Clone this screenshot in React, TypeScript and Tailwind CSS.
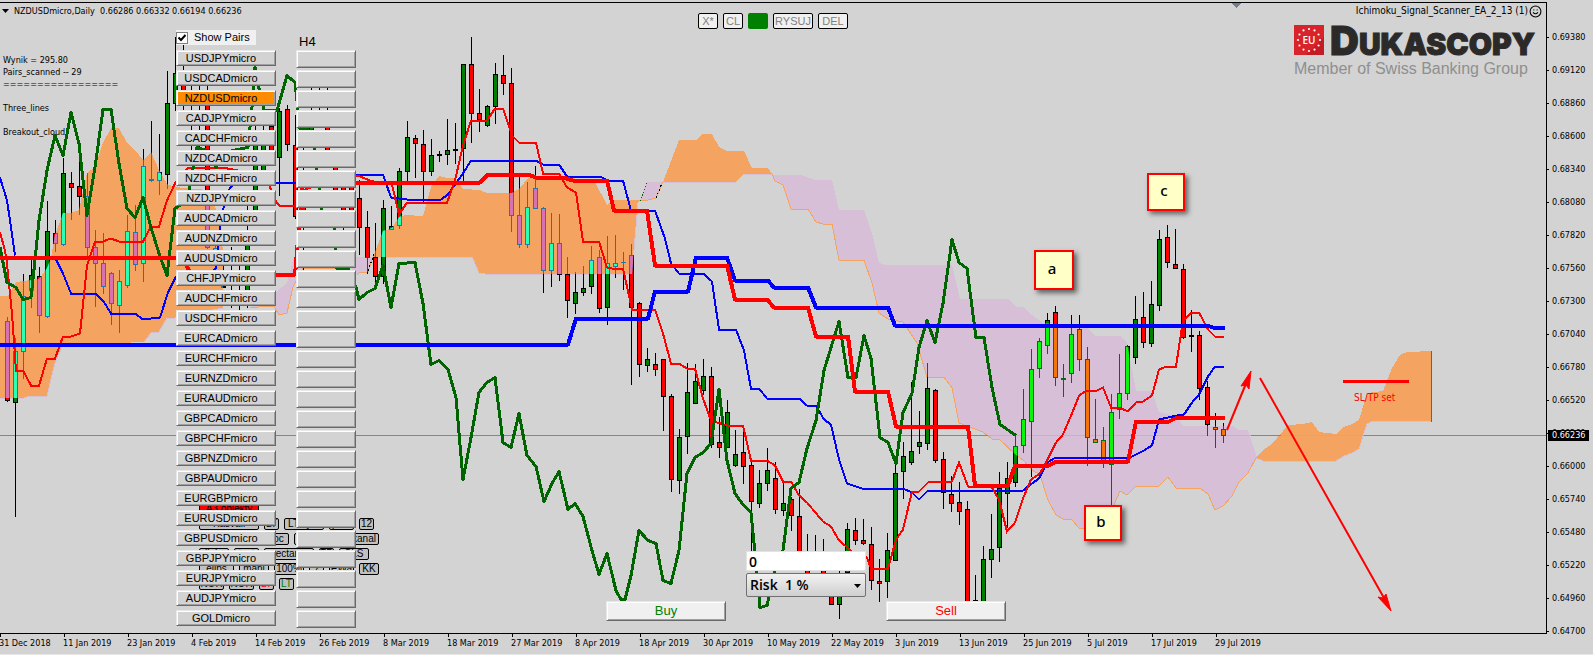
import React from "react";
import { Smile } from "lucide-react";

const UI = "font-['DejaVu_Sans_Condensed','DejaVu_Sans',sans-serif]";

const pairs = [
  "USDJPY", "USDCAD", "NZDUSD", "CADJPY", "CADCHF", "NZDCAD", "NZDCHF", "NZDJPY",
  "AUDCAD", "AUDNZD", "AUDUSD", "CHFJPY", "AUDCHF", "USDCHF", "EURCAD", "EURCHF",
  "EURNZD", "EURAUD", "GBPCAD", "GBPCHF", "GBPNZD", "GBPAUD", "EURGBP", "EURUSD",
  "GBPUSD", "GBPJPY", "EURJPY", "AUDJPY", "GOLD",
];

const dates = [
  "31 Dec 2018", "11 Jan 2019", "23 Jan 2019", "4 Feb 2019", "14 Feb 2019",
  "26 Feb 2019", "8 Mar 2019", "18 Mar 2019", "27 Mar 2019", "8 Apr 2019",
  "18 Apr 2019", "30 Apr 2019", "10 May 2019", "22 May 2019", "3 Jun 2019",
  "13 Jun 2019", "25 Jun 2019", "5 Jul 2019", "17 Jul 2019", "29 Jul 2019",
];

const prices = Array.from({ length: 19 }, (_, i) => ((69380 - i * 260) / 100000).toFixed(5));

// x, high, low, body top, body bottom, direction
type Candle = [number, number, number, number, number, "u" | "d"];

const candles: Candle[] = [
  [7, 317, 401, 321, 400, "d"], [15, 338, 516, 351, 402, "u"], [23, 274, 378, 296, 351, "u"],
  [31, 259, 307, 275, 290, "u"], [39, 267, 332, 276, 315, "d"], [47, 201, 317, 231, 316, "u"],
  [55, 220, 251, 233, 243, "d"], [63, 158, 245, 173, 244, "u"], [71, 172, 219, 183, 187, "d"],
  [79, 156, 214, 186, 196, "d"], [87, 173, 255, 196, 247, "d"], [95, 230, 306, 247, 263, "d"],
  [103, 233, 293, 263, 286, "d"], [111, 272, 324, 273, 303, "d"], [119, 270, 332, 281, 305, "u"],
  [127, 215, 287, 231, 285, "u"], [135, 205, 270, 232, 264, "d"], [143, 149, 281, 166, 263, "u"],
  [151, 121, 181, 179, 180, "u"], [159, 134, 194, 172, 180, "u"], [167, 71, 188, 103, 174, "u"],
  [175, 37, 110, 73, 103, "u"], [183, 45, 110, 75, 95, "d"], [191, 85, 150, 95, 101, "d"],
  [199, 85, 150, 115, 121, "u"], [207, 85, 248, 105, 247, "d"], [215, 230, 270, 248, 252, "u"],
  [223, 265, 287, 286, 287, "d"], [231, 247, 307, 270, 280, "u"], [239, 260, 310, 270, 280, "d"],
  [247, 205, 307, 240, 290, "u"], [255, 110, 215, 145, 210, "u"], [263, 106, 172, 143, 170, "u"],
  [271, 120, 152, 126, 150, "d"], [279, 108, 195, 111, 157, "u"], [287, 105, 150, 109, 144, "d"],
  [295, 115, 218, 145, 216, "d"], [303, 120, 280, 190, 212, "d"], [311, 85, 135, 125, 132, "u"],
  [319, 86, 110, 104, 106, "u"], [327, 85, 150, 120, 150, "d"], [335, 160, 195, 165, 190, "d"],
  [343, 180, 230, 185, 211, "d"], [351, 180, 215, 186, 210, "d"], [359, 180, 254, 198, 227, "d"],
  [367, 211, 273, 227, 257, "d"], [375, 223, 287, 257, 276, "d"], [383, 200, 283, 208, 276, "u"],
  [391, 206, 229, 226, 229, "u"], [399, 168, 228, 171, 225, "u"], [407, 121, 180, 137, 171, "u"],
  [415, 135, 177, 138, 143, "d"], [423, 130, 201, 144, 171, "d"], [431, 139, 175, 155, 171, "u"],
  [439, 151, 161, 154, 155, "u"], [447, 119, 164, 150, 154, "u"], [455, 123, 163, 149, 150, "u"],
  [463, 64, 180, 64, 148, "u"], [471, 37, 142, 64, 113, "d"], [479, 89, 131, 113, 119, "d"],
  [487, 105, 126, 106, 125, "u"], [495, 63, 123, 74, 106, "u"], [503, 55, 94, 75, 83, "d"],
  [511, 68, 231, 83, 215, "d"], [519, 177, 247, 215, 244, "d"], [527, 182, 247, 207, 244, "u"],
  [535, 166, 208, 188, 208, "d"], [543, 207, 292, 208, 270, "d"], [551, 213, 286, 243, 270, "u"],
  [559, 214, 280, 243, 274, "d"], [567, 257, 317, 274, 300, "d"], [575, 272, 313, 292, 303, "u"],
  [583, 266, 295, 288, 292, "u"], [591, 246, 293, 260, 286, "u"], [599, 250, 312, 257, 308, "d"],
  [607, 236, 324, 263, 307, "u"], [615, 235, 277, 263, 266, "u"], [623, 252, 289, 262, 262, "u"],
  [631, 244, 384, 255, 307, "d"], [639, 302, 376, 303, 364, "d"], [647, 348, 371, 359, 365, "u"],
  [655, 353, 375, 364, 369, "d"], [663, 359, 430, 359, 396, "d"], [671, 394, 491, 396, 479, "d"],
  [679, 429, 493, 437, 480, "u"], [687, 363, 453, 392, 436, "u"], [695, 364, 403, 381, 403, "u"],
  [703, 359, 394, 376, 390, "u"], [711, 367, 447, 376, 444, "d"], [719, 417, 457, 442, 447, "d"],
  [727, 400, 447, 412, 447, "u"], [735, 430, 466, 454, 465, "u"], [743, 430, 483, 452, 466, "d"],
  [751, 460, 560, 465, 501, "d"], [759, 470, 507, 483, 503, "u"], [767, 448, 490, 470, 483, "u"],
  [775, 462, 513, 478, 509, "d"], [783, 482, 515, 503, 510, "u"], [791, 497, 530, 499, 515, "d"],
  [799, 489, 560, 516, 556, "d"], [807, 534, 580, 565, 582, "d"], [815, 535, 565, 560, 564, "d"],
  [823, 539, 580, 560, 582, "d"], [831, 575, 604, 580, 604, "d"], [839, 571, 618, 580, 604, "u"],
  [847, 523, 573, 529, 572, "u"], [855, 518, 544, 530, 540, "d"], [863, 519, 544, 540, 543, "d"],
  [871, 527, 589, 544, 580, "d"], [879, 559, 601, 581, 583, "d"], [887, 533, 597, 550, 581, "u"],
  [895, 462, 560, 473, 560, "u"], [903, 442, 498, 456, 471, "u"], [911, 382, 464, 451, 462, "u"],
  [919, 411, 453, 442, 446, "u"], [927, 363, 449, 388, 443, "u"], [935, 389, 462, 390, 460, "d"],
  [943, 452, 508, 459, 492, "d"], [951, 476, 511, 494, 503, "d"], [959, 482, 524, 502, 511, "d"],
  [967, 501, 612, 509, 612, "d"], [975, 575, 602, 600, 601, "u"], [983, 546, 612, 559, 612, "u"],
  [991, 514, 577, 549, 559, "u"], [999, 472, 561, 488, 547, "u"], [1007, 462, 527, 478, 493, "u"],
  [1015, 435, 486, 446, 482, "u"], [1023, 389, 452, 419, 445, "u"], [1031, 349, 476, 369, 421, "u"],
  [1039, 338, 377, 341, 368, "u"], [1047, 313, 353, 320, 345, "u"], [1055, 306, 385, 312, 377, "d"],
  [1063, 364, 396, 378, 379, "u"], [1071, 315, 382, 334, 373, "u"], [1079, 315, 370, 329, 359, "d"],
  [1087, 347, 465, 359, 437, "d"], [1095, 399, 442, 439, 442, "d"], [1103, 427, 467, 440, 463, "d"],
  [1111, 394, 505, 412, 464, "u"], [1119, 354, 418, 393, 409, "u"], [1127, 345, 399, 346, 393, "u"],
  [1135, 296, 363, 319, 357, "u"], [1143, 292, 347, 317, 342, "d"], [1151, 281, 346, 304, 343, "u"],
  [1159, 230, 310, 239, 305, "u"], [1167, 225, 267, 237, 262, "d"], [1175, 229, 268, 264, 268, "d"],
  [1183, 264, 338, 269, 337, "d"], [1191, 310, 351, 335, 336, "u"], [1199, 331, 399, 335, 388, "d"],
  [1207, 381, 435, 387, 424, "d"], [1215, 413, 447, 427, 429, "d"], [1223, 423, 442, 429, 435, "d"],
];

const orangeAreas = [
  "0,296 8,296 16,282 39,279 47,268 51,258 55,235 63,213 71,213 79,210 87,173 95,167 103,143 111,128 119,128 127,143 135,150 143,160 151,152 159,170 167,184 175,187 207,190 215,205 223,250 223,308 175,318 167,318 159,332 151,333 144,342 63,345 55,363 47,396 30,396 24,398 0,398",
  "373,257 383,231 392,228 399,217 405,215 423,216 431,187 439,176 447,178 455,178 463,189 480,190 487,193 512,193 520,188 528,178 536,177 560,176 595,182 607,205 614,200 640,200 638,203 632,274 485,274 479,273 472,257",
  "663,182 679,140 696,140 703,134 712,134 719,147 727,151 744,151 752,168 768,168 772,174 744,174 736,182",
  "1256,458 1263,450 1272,444 1288,425 1303,424 1312,422 1319,432 1336,434 1344,427 1352,424 1359,420 1367,393 1383,391 1392,368 1400,355 1407,352 1432,351 1432,421 1373,421 1367,424 1359,449 1352,453 1344,456 1336,461 1263,461",
];

const thistleAreas = [
  "250,308 276,292 287,283 293,260 296,257 373,257 368,272 360,272 357,275 350,268 303,268 293,287 287,313 279,315 274,306 267,306",
  "640,200 647,182 663,182 656,198 648,200",
  "773,175 802,175 815,180 832,180 839,210 864,210 872,233 879,263 885,265 952,265 960,299 1008,299 1016,307 1023,307 1032,315 1043,323 1087,327 1095,336 1120,336 1127,343 1136,391 1152,391 1159,412 1167,414 1176,416 1183,426 1233,426 1239,430 1248,430 1257,458 1248,473 1239,482 1232,496 1223,506 1215,510 1208,494 1200,488 1176,488 1168,477 1159,486 1136,486 1127,495 1120,491 1114,505 1087,528 1079,528 1072,520 1063,519 1056,515 1048,500 1040,475 1032,470 1023,460 1016,455 999,439 992,439 983,432 975,429 959,423 952,388 944,377 927,377 917,343 903,322 888,319 879,313 872,283 864,260 839,260 832,224 823,224 816,222 808,209 791,209 783,185 775,181",
];

const orangeEdges = [
  "250,308 267,306 274,306 279,315 287,313 293,287 303,268 350,268",
  "357,275 360,272 368,272 373,257",
  "638,200 648,200 656,198 663,182",
  "772,174 775,181 783,185 791,209 808,209 816,222 823,224 832,224 839,260 864,260 872,283 879,313 888,319 903,322 917,343 927,377 944,377 952,388 959,423 975,429 983,432 992,439 999,439 1016,455 1023,460 1032,470 1040,475 1048,500 1056,515 1063,519 1072,520 1079,528 1087,528",
  "1114,505 1120,491 1127,495 1136,486 1159,486 1168,477 1176,488 1200,488 1208,494 1215,510 1223,506 1232,496 1239,482 1248,473 1256,458",
];

const thistleEdges = [
  "0,398 24,398 30,396 47,396 55,363 63,345",
  "144,342 151,333 159,332 167,318 175,318 223,308",
  "373,257 472,257 479,273 485,274 632,274 638,203",
  "663,182 736,182 744,174 772,174",
  "1256,458 1263,461 1336,461 1344,456 1352,453 1359,449 1367,424 1373,421 1432,421",
];

const thinBlue = [
  "0,177 7,200 10,220 15,255",
  "56,259 63,273 71,293 95,293 103,300 111,313 135,313 143,319 151,318 160,317 168,292 176,276 207,276 216,268 220,225 224,205 230,187 237,182 296,182 303,174 383,174 391,197 407,199 441,199 448,194 455,184 463,173 471,160 536,160 543,164 559,164 567,176 602,177 607,180 623,180 631,210 655,210 665,238 671,263 679,273 703,273 712,281 719,329 736,329 744,350 751,388 759,388 767,398 799,398 807,405 816,405 824,419 831,424 839,459 847,483 862,488 903,488 912,492 919,499 928,490 1023,490 1032,483 1039,478 1047,462 1056,457 1130,457 1144,450 1152,445 1159,419 1177,415 1184,414 1192,402 1199,394 1208,376 1215,366 1224,366",
];

const thinRed =
  "0,232 5,250 7,263 12,313 16,370 23,370 31,385 39,385 47,358 55,358 63,336 71,336 80,333 87,265 95,241 103,241 111,238 119,241 143,241 151,226 159,226 167,200 175,183 188,167 222,167 233,169 265,175 276,201 279,205 296,205 303,190 343,174 360,176 370,180 383,183 392,184 399,214 407,202 447,202 455,180 463,145 471,120 487,120 495,108 503,108 512,135 519,142 536,142 543,173 559,173 567,187 576,192 583,241 599,241 607,267 612,268 623,268 632,309 655,309 663,333 671,363 679,363 687,368 695,368 703,398 711,420 717,422 727,425 743,425 751,460 767,460 775,465 783,481 791,481 799,495 807,502 823,521 831,526 839,540 852,551 867,557 871,568 888,568 896,539 903,529 912,491 919,491 928,482 952,481 959,462 968,486 992,487 999,499 1007,531 1015,522 1023,498 1031,479 1040,473 1047,460 1056,442 1063,434 1072,413 1079,395 1087,390 1097,390 1103,387 1111,407 1119,407 1128,411 1136,402 1143,401 1152,395 1159,369 1167,366 1176,366 1183,320 1192,312 1199,312 1208,329 1215,336 1224,336";

const thickBlue =
  "0,344 568,344 576,318 648,318 655,291 688,291 696,257 727,257 735,280 768,280 774,287 808,287 816,307 888,307 895,325 1207,325 1213,327 1225,327";

const thickRed =
  "0,257 183,257 191,274 295,274 303,182 480,182 488,174 528,174 536,177 563,177 573,180 607,180 614,210 647,210 655,265 727,265 735,299 767,299 774,307 808,307 816,336 848,336 855,391 888,391 896,426 968,426 975,485 1008,485 1015,465 1049,465 1056,461 1128,461 1136,421 1169,421 1177,417 1225,417";

const laggingLine =
  "0,247 7,282 16,287 23,299 31,297 35,260 39,220 47,170 55,135 63,155 71,112 79,143 87,215 95,167 103,109 111,109 119,163 127,208 135,217 143,197 151,227 159,253 167,275 175,208 187,200 197,147 207,150 216,167 226,152 237,149 248,147 252,107 255,67 259,88 264,110 277,110 287,75 295,82 300,128 312,130 322,212 333,212 337,268 348,268 356,287 359,299 367,292 375,288 383,265 391,307 399,263 415,262 423,303 431,364 439,360 448,369 456,397 463,479 471,437 479,392 487,382 495,377 503,442 511,447 519,413 527,455 536,466 544,501 552,483 559,471 568,509 575,503 583,516 592,550 599,574 607,553 616,590 621,599 625,599 631,575 639,530 648,540 656,543 663,580 671,583 679,550 687,473 695,457 703,452 711,443 719,389 727,460 735,493 743,504 751,512 757,573 760,607 767,605 775,570 783,550 791,488 799,482 807,448 816,420 824,370 839,321 848,377 856,377 864,335 871,358 880,437 888,442 896,463 903,412 912,393 919,347 927,320 935,342 943,303 952,239 959,262 967,268 976,337 984,337 992,387 1000,424 1016,435";

function Candles({ up, down, edge }: { up: string; down: string; edge: string }) {
  return (
    <>
      {candles.map(([x, high, low, top, bottom, dir]) => (
        <g key={x}>
          <rect x={x} y={high} width={1} height={low - high + 1} fill={edge} />
          <rect x={x - 2} y={top} width={5} height={bottom - top + 1} fill={edge} />
          {bottom - top > 1 && (
            <rect x={x - 1} y={top + 1} width={3} height={bottom - top - 1} fill={dir === "u" ? up : down} />
          )}
        </g>
      ))}
    </>
  );
}

function Chart() {
  return (
    <svg
      className="absolute inset-0 h-full w-full"
      viewBox="0 3 1546 630"
      preserveAspectRatio="none"
      role="img"
      aria-label="Daily candlestick chart with Ichimoku cloud"
    >
      <defs>
        <clipPath id="orange-cloud">
          {orangeAreas.map((p) => <polygon key={p} points={p} />)}
        </clipPath>
        <clipPath id="thistle-cloud">
          {thistleAreas.map((p) => <polygon key={p} points={p} />)}
        </clipPath>
      </defs>
      <g shapeRendering="crispEdges">
        {thistleAreas.map((p) => <polygon key={p} points={p} fill="#d8bfd8" />)}
        {orangeAreas.map((p) => <polygon key={p} points={p} fill="#f4a460" />)}
        <g fill="none" strokeWidth={1}>
          {orangeEdges.map((p) => <polyline key={p} points={p} stroke="#f4a460" />)}
          {thistleEdges.map((p) => <polyline key={p} points={p} stroke="#d8bfd8" />)}
          <path d="M640 201L647 183" stroke="#006400" strokeDasharray="1 2" />
          <path d="M656 198L662 183" stroke="#000" strokeDasharray="2 2" />
          <path d="M368 271L374 254" stroke="#000" strokeDasharray="2 2" />
        </g>
        <rect x={1431} y={351} width={1} height={71} fill="#1f78b4" />

        <rect x={0} y={435} width={1546} height={1} fill="#778899" />
        <rect x={988} y={435} width={263} height={1} fill="#7fe08c" />
        <rect x={1281} y={435} width={83} height={1} fill="#78e62d" />

        <Candles up="#008000" down="#ff0000" edge="#000000" />
        <g clipPath="url(#orange-cloud)">
          <Candles up="#2bffb4" down="#d872b0" edge="#1f78b4" />
        </g>
        <g clipPath="url(#thistle-cloud)">
          <Candles up="#0bf40b" down="#f4740b" edge="#006e0b" />
        </g>

        <g fill="none" transform="translate(0 0.5)">
          {thinBlue.map((p) => <polyline key={p} points={p} stroke="#0000ff" strokeWidth={2} />)}
          <polyline points={thinRed} stroke="#ff0000" strokeWidth={2} />
          <polyline points={laggingLine} stroke="#006400" strokeWidth={3} strokeLinejoin="round" />
          <polyline points={thickBlue} stroke="#0000ff" strokeWidth={4} strokeLinejoin="round" />
          <polyline points={thickRed} stroke="#ff0000" strokeWidth={4} strokeLinejoin="round" />
        </g>
        <path d="M1343 381H1409" stroke="#ff0000" strokeWidth={3} />
        <polygon points="1231,3 1241,3 1236,8" fill="#708090" />
      </g>
      <g stroke="#ff0000" strokeWidth={2} fill="#ff0000">
        <path d="M1227 430L1247 381M1260 378L1384 598" />
        <path d="M1251 371L1241 386L1246 385L1249 389Z" strokeWidth={1} />
        <path d="M1391 611L1378 597L1383 598L1386 594Z" strokeWidth={1} />
      </g>
    </svg>
  );
}

const bevel =
  "border border-t-[#e8e8e8] border-l-[#e8e8e8] border-r-[#696969] border-b-[#696969] shadow-[inset_1px_1px_0_#ffffff,inset_-1px_-1px_0_#a0a0a0]";

const toolRows: { label: string; width: string; tone?: string }[][] = [
  [{ label: "A3 objekty", width: "w-[60px]", tone: "bg-[#ff0000] text-black" }],
  [
    { label: "Kasvall", width: "w-[60px]" }, { label: "LT", width: "w-[15px]" },
    { label: "LT sym", width: "w-[40px]" }, { label: "pion", width: "w-[25px]" },
    { label: "12", width: "w-[15px]" },
  ],
  [
    { label: "trend", width: "w-[55px]" }, { label: "proc", width: "w-[30px]" },
    { label: "fibo", width: "w-[50px]" }, { label: "kanal", width: "w-[30px]" },
  ],
  [
    { label: "linia", width: "w-[30px]" }, { label: "text", width: "w-[25px]" },
    { label: "rectang", width: "w-[50px]" }, { label: "TP", width: "w-[15px]" },
    { label: "SLS", width: "w-[30px]" },
  ],
  [
    { label: "elips", width: "w-[35px]" }, { label: "mani", width: "w-[30px]" },
    { label: "100%", width: "w-[30px]" }, { label: "?", width: "w-[15px]" },
    { label: "EWa", width: "w-[25px]" }, { label: "KK", width: "w-[20px]" },
  ],
  [
    { label: "NOR", width: "w-[25px]" }, { label: "NOR", width: "w-[25px]" },
    { label: "LT", width: "w-[15px]", tone: "bg-[#c0c0c0] text-[#ff0000]" },
    { label: "LT", width: "w-[15px]", tone: "bg-[#c0c0c0] text-[#008000]" },
  ],
];

function DrawingTools() {
  return (
    <div className="absolute left-[199px] top-[500px] flex flex-col gap-[3px]">
      {toolRows.map((row, i) => (
        <div key={i} className="flex gap-[5px]">
          {row.map((b, j) => (
            <button
              key={j}
              className={`flex h-3 items-center justify-center overflow-hidden whitespace-nowrap rounded-[2px] border border-black text-[10px] leading-[10px] ${b.width} ${b.tone ?? "bg-[#c0c0c0] text-black"}`}
            >
              {b.label}
            </button>
          ))}
        </div>
      ))}
    </div>
  );
}

function PairPanel() {
  return (
    <div className="absolute left-[176px] top-[27px]">
      <label className="flex h-[15px] w-20 items-center bg-[#f0f0f0] text-[11px] leading-[15px] text-black">
        <input type="checkbox" defaultChecked className="h-3 w-3 appearance-none border border-[#808080] bg-white" />
        <svg className="pointer-events-none absolute left-[2px] h-2 w-2" viewBox="0 0 8 8" fill="none" stroke="#000" strokeWidth={2}>
          <path d="M0.5 3.5L3 6L7.5 1" />
        </svg>
        <span className="pl-[6px]">Show Pairs</span>
      </label>
      <div className="mt-[5px] flex flex-col gap-1">
        {pairs.map((p) => (
          <button
            key={p}
            className={`flex h-4 w-[100px] items-center justify-center pr-[10px] text-[11px] leading-[14px] text-black ${bevel} ${p === "NZDUSD" ? "bg-[#ff8c00]" : "bg-[#d3d3d3]"}`}
          >
            {p}micro
          </button>
        ))}
      </div>
    </div>
  );
}

function TimeframePanel() {
  return (
    <div className="absolute left-[296px] top-[31px]">
      <div className="h-4 pl-[3px] text-[13px] leading-4 text-black">H4</div>
      <div className="flex flex-col gap-[2px]">
        {pairs.map((p) => (
          <button key={p} aria-label={`${p}micro H4`} className={`h-[18px] w-[60px] bg-[#d3d3d3] ${bevel}`} />
        ))}
      </div>
    </div>
  );
}

function TopTools() {
  const base = "h-4 rounded-[2px] border border-black bg-[#f0f0f0] text-[11px] leading-[14px] text-[#808080]";
  return (
    <div className="absolute left-[698px] top-[10px] flex gap-[5px]">
      <button className={`${base} w-5`}>X*</button>
      <button className={`${base} w-5`}>CL</button>
      <button aria-label="Active" className="h-4 w-5 rounded-[2px] bg-[#008000]" />
      <button className={`${base} w-10`}>RYSUJ</button>
      <button className={`${base} w-[30px]`}>DEL</button>
    </div>
  );
}

function Logo() {
  const stars = Array.from({ length: 12 }, (_, i) => (i * Math.PI) / 6);
  return (
    <div className="absolute right-[9px] top-[22px] w-[243px]">
      <div className="flex items-end gap-[6px]">
        <svg className="h-[30px] w-[30px] shrink-0" viewBox="0 0 30 30">
          <rect width="30" height="30" fill="#d8232a" />
          <path d="M30 0V30H12L30 12Z" fill="#c41c24" />
          {stars.map((a) => (
            <circle key={a} cx={15 + 11 * Math.sin(a)} cy={15 - 11 * Math.cos(a)} r="1.1" fill="#fff" />
          ))}
          <text x="15" y="19" textAnchor="middle" fontSize="10" fontWeight="600" fill="#fff" fontFamily="'Open Sans', sans-serif">
            EU
          </text>
        </svg>
        <div className="flex h-[30px] items-baseline font-['Inter',sans-serif] font-black text-[#2b2a29] [-webkit-text-stroke:1px_#2b2a29]">
          <span className="text-[40px] leading-8">D</span>
          <span className="text-[30px] leading-8">UKASCOPY</span>
        </div>
      </div>
      <div className="whitespace-nowrap pt-1 text-[16px] leading-5 text-[#8f8f8f]">Member of Swiss Banking Group</div>
    </div>
  );
}

function Note({ text, className }: { text: string; className: string }) {
  return (
    <div
      className={`absolute flex items-center justify-center border-2 border-[#ff0000] bg-[#ffffc8] pr-1 pb-1 font-['Noto_Sans',sans-serif] text-[15px] font-medium leading-4 text-black shadow-[3px_3px_5px_rgba(0,0,0,0.55)] ${className}`}
    >
      {text}
    </div>
  );
}

export default function App() {
  return (
    <div className="flex min-h-screen flex-col overflow-hidden border-b border-r border-b-[#e8e8e8] border-r-white bg-[#d3d3d3] pt-[2px] font-['Liberation_Sans',Arial,sans-serif]">
      <div className="flex flex-1">
        <main className="relative min-w-0 flex-1 overflow-hidden border-b border-r border-t border-black">
          <Chart />

          <div className={`relative flex items-center justify-between pl-[2px] pr-1 leading-4 text-black ${UI}`}>
            <div className="flex items-center gap-[5px]">
              <svg className="h-1 w-[7px]" viewBox="0 0 7 4"><path d="M0 0H7L3.5 4Z" /></svg>
              <span className="whitespace-pre text-[9px]">NZDUSDmicro,Daily  0.66286 0.66332 0.66194 0.66236</span>
            </div>
            <div className="flex items-center gap-[1px] text-[10px]">
              <span>Ichimoku_Signal_Scanner_EA_2_13 (1)</span>
              <Smile size={13} strokeWidth={2} />
            </div>
          </div>

          <div className={`absolute left-[3px] top-[51px] text-[9px] leading-3 text-black ${UI}`}>
            <p>Wynik = 295.80</p>
            <p>Pairs_scanned -- 29</p>
            <p>=================</p>
            <p className="pt-3">Three_lines</p>
            <p className="pt-3">Breakout_cloud</p>
          </div>

          <DrawingTools />
          <PairPanel />
          <TimeframePanel />
          <TopTools />
          <Logo />

          <Note text="a" className="left-[1034px] top-[247px] h-10 w-10" />
          <Note text="b" className="left-[1084px] top-[502px] h-9 w-[38px]" />
          <Note text="c" className="left-[1147px] top-[170px] h-[38px] w-[38px]" />

          <span className={`absolute left-[1354px] top-[389px] text-[10px] leading-3 text-[#ff0000] ${UI}`}>SL/TP set</span>

          <div className="absolute left-[746px] top-[548px] flex w-[120px] flex-col gap-[2px] font-['Open_Sans',sans-serif] text-[14px] font-semibold text-black">
            <input
              aria-label="Stop distance"
              defaultValue="0"
              className="h-5 w-full border border-[#e3e3e3] bg-white px-[2px] leading-[18px] outline-none"
            />
            <div className="relative">
              <select
                aria-label="Risk"
                className="h-6 w-full appearance-none rounded-[2px] border border-[#707070] bg-gradient-to-b from-[#f2f2f2] to-[#cfcfcf] px-[3px] leading-[22px] outline-none"
              >
                <option>Risk&nbsp; 1 %</option>
                <option>Risk&nbsp; 2 %</option>
              </select>
              <svg className="pointer-events-none absolute right-[5px] top-[11px] h-1 w-[7px]" viewBox="0 0 7 4"><path d="M0 0H7L3.5 4Z" /></svg>
            </div>
          </div>

          <div className="absolute left-[606px] top-[598px] flex gap-[160px] text-[13px] leading-[18px]">
            <button className={`h-5 w-[120px] bg-[#f0f0f0] text-[#008000] ${bevel}`}>Buy</button>
            <button className={`h-5 w-[120px] bg-[#f0f0f0] text-[#ff0000] ${bevel}`}>Sell</button>
          </div>
        </main>

        <aside className={`relative flex w-[46px] shrink-0 flex-col justify-between pt-8 text-[9px] leading-3 text-black ${UI}`}>
          {prices.map((p) => (
            <div key={p} className="flex h-[6px] items-center gap-[3px]">
              <span className="h-px w-[2px] bg-black" />
              <span>{p}</span>
            </div>
          ))}
          <span className="absolute left-px top-[428px] h-[11px] w-[41px] bg-black pl-1 leading-[11px] text-white">0.66236</span>
        </aside>
      </div>

      <footer className={`-ml-px flex h-5 overflow-hidden text-[9px] text-black ${UI}`}>
        {dates.map((d) => (
          <div key={d} className="w-16 shrink-0 whitespace-nowrap">
            <span className="ml-px block h-[3px] w-px bg-black" />
            <span className="block h-3 leading-3">{d}</span>
          </div>
        ))}
      </footer>
    </div>
  );
}
